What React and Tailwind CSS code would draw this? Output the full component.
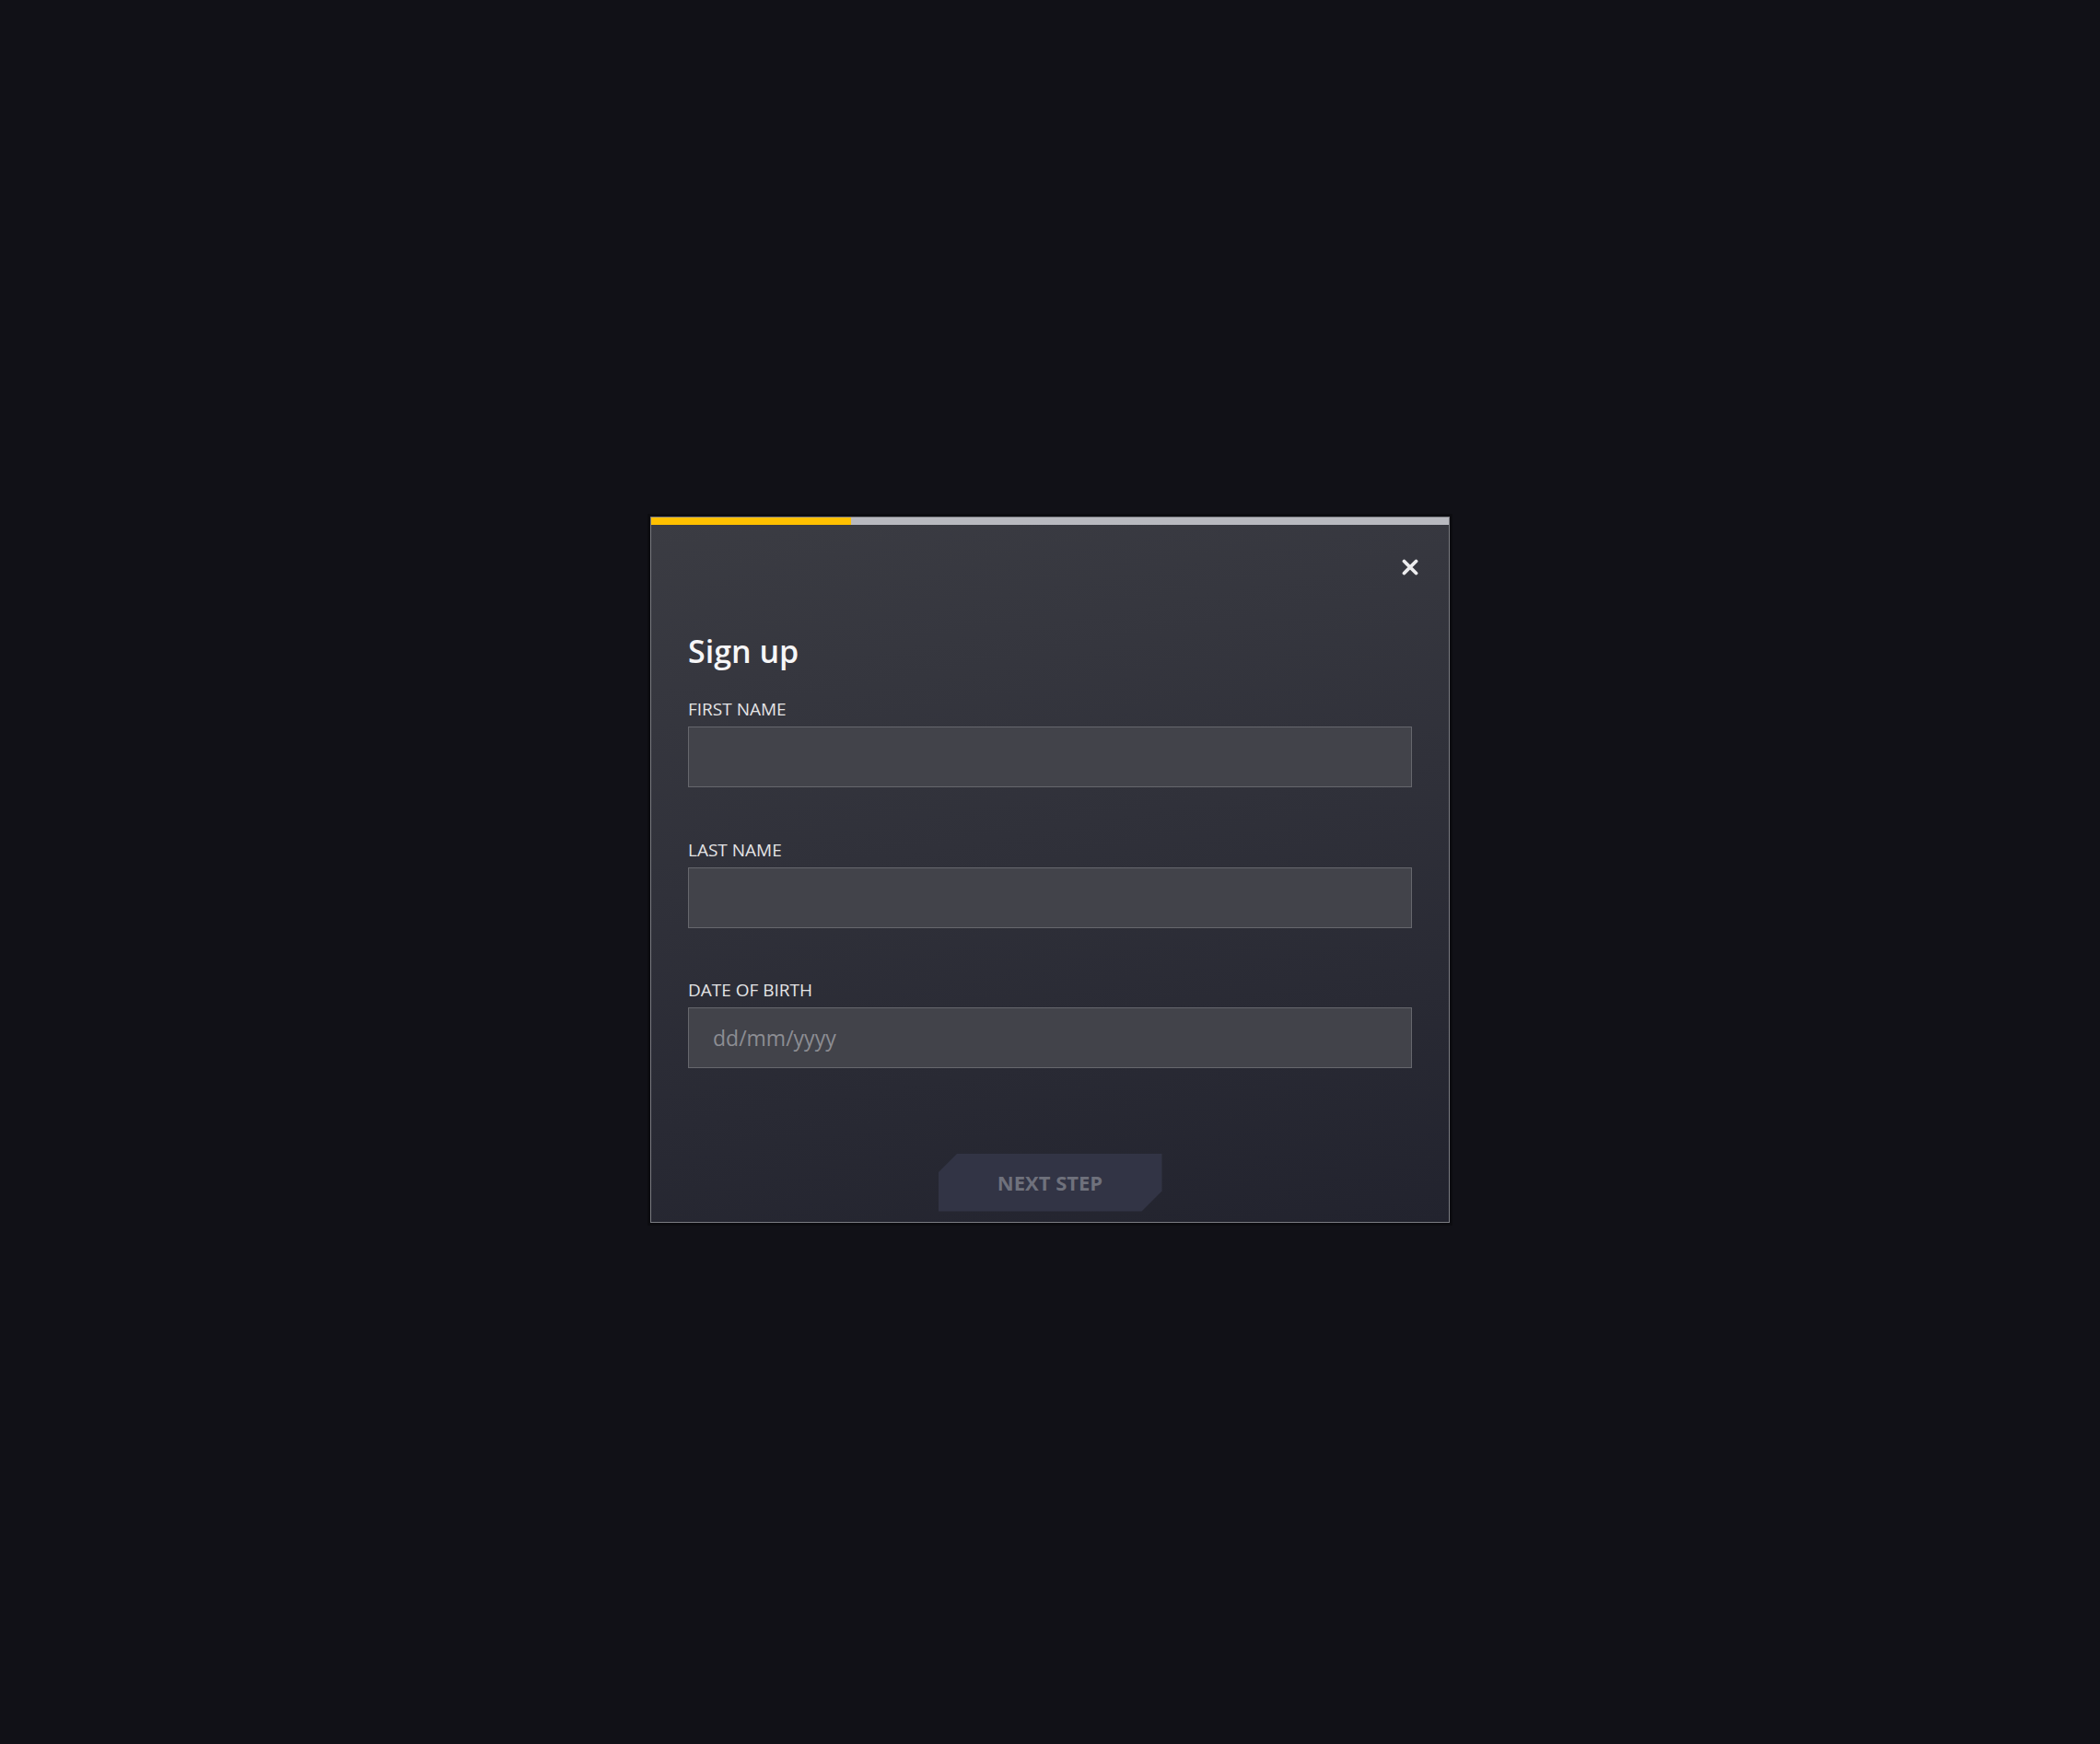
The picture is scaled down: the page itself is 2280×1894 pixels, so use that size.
import { useState } from "react";

function Field({ label, value, onChange, placeholder, className }) {
  return (
    <div className={className}>
      <label className="block text-[19px] leading-[24px] text-[#e4e4e6]">{label}</label>
      <input
        className="mt-[7px] block h-[66px] w-full border border-[#66676d] bg-[#42434a] px-[26px] text-[23px] text-[#d8d8dc] outline-none placeholder:text-[#8c8d93]"
        value={value}
        placeholder={placeholder}
        onChange={(e) => onChange(e.target.value)}
      />
    </div>
  );
}

function App() {
  const [first, setFirst] = useState("");
  const [last, setLast] = useState("");
  const [dob, setDob] = useState("");

  return (
    <div
      className="flex min-h-screen items-center justify-center bg-[#111117] pb-[6px]"
      style={{ fontFamily: '"Open Sans", "Liberation Sans", sans-serif' }}
    >
      <div className="flex w-[868px] flex-col border border-[#7b7c82] bg-[linear-gradient(170deg,#3b3c43_0%,#30313a_45%,#22232e_100%)] shadow-[0_0_0_3px_#0c0c10]">
        {/* progress */}
        <div className="flex h-2">
          <div className="w-[217px] bg-[#ffc000]" />
          <div className="flex-1 bg-[#b8b9bf]" />
        </div>

        <div className="flex justify-end pr-[32px] pt-[36px]">
          <button type="button" className="h-5 w-5 text-[#ececee]">
            <svg viewBox="0 0 20 20" className="h-5 w-5" fill="none" stroke="currentColor" strokeWidth="3.8" strokeLinecap="round">
              <path d="M3.5 3.5 L16.5 16.5 M16.5 3.5 L3.5 16.5" />
            </svg>
          </button>
        </div>

        <h1 className="mt-[61px] px-10 text-[34px] font-semibold leading-[40px] text-[#f6f6f7]">Sign up</h1>

        <form className="flex flex-col px-10" onSubmit={(e) => e.preventDefault()}>
          <Field className="mt-[31px]" label="FIRST NAME" value={first} onChange={setFirst} />
          <Field className="mt-[56px]" label="LAST NAME" value={last} onChange={setLast} />
          <Field className="mt-[55px]" label="DATE OF BIRTH" value={dob} onChange={setDob} placeholder="dd/mm/yyyy" />

          <button
            type="submit"
            className="mb-[11px] mt-[93px] h-[63px] w-[243px] self-center bg-[#323445] text-[22px] font-bold text-[#6f717c] [clip-path:polygon(21px_0,100%_0,100%_calc(100%_-_22px),calc(100%_-_22px)_100%,0_100%,0_21px)]"
          >
            NEXT STEP
          </button>
        </form>
      </div>
    </div>
  );
}

export default App;
